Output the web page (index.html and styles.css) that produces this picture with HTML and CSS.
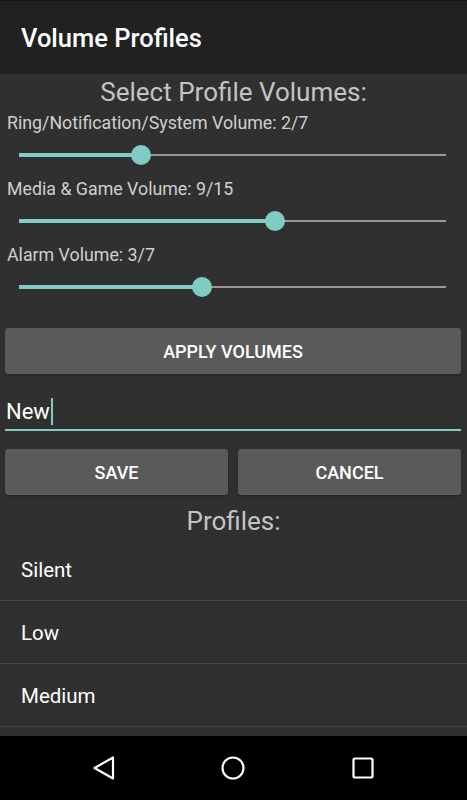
FILE: index.html
```html
<!DOCTYPE html>
<html>
<head>
<meta charset="utf-8">
<link rel="stylesheet" href="styles.css">
</head>
<body>
<div class="app">
  <header class="appbar"><h1 class="title">Volume Profiles</h1></header>
  <main class="content">
    <h2 class="heading">Select Profile Volumes:</h2>
    <div class="group">
      <div class="label">Ring/Notification/System Volume: 2/7</div>
      <div class="slider"><div class="track"><div class="fill" style="width:28.571%"></div><div class="thumb" style="left:28.571%"></div></div></div>
    </div>
    <div class="group">
      <div class="label">Media &amp; Game Volume: 9/15</div>
      <div class="slider"><div class="track"><div class="fill" style="width:60%"></div><div class="thumb" style="left:60%"></div></div></div>
    </div>
    <div class="group">
      <div class="label">Alarm Volume: 3/7</div>
      <div class="slider"><div class="track"><div class="fill" style="width:42.857%"></div><div class="thumb" style="left:42.857%"></div></div></div>
    </div>
    <button class="btn btn-wide">APPLY VOLUMES</button>
    <div class="edit"><span class="edit-text">New</span><span class="cursor"></span></div>
    <div class="btn-row">
      <button class="btn">SAVE</button>
      <button class="btn">CANCEL</button>
    </div>
    <h2 class="heading heading-profiles">Profiles:</h2>
    <ul class="list">
      <li class="item">Silent</li>
      <li class="item">Low</li>
      <li class="item">Medium</li>
    </ul>
  </main>
  <nav class="navbar">
    <svg class="nav-icon" width="28" height="28" viewBox="0 0 28 28"><path d="M24 3.5 L24 24.5 L5.5 14 Z" fill="none" stroke="#fff" stroke-width="2.2" stroke-linejoin="round"/></svg>
    <svg class="nav-icon" width="28" height="28" viewBox="0 0 28 28"><circle cx="14" cy="14" r="10.5" fill="none" stroke="#fff" stroke-width="2.2"/></svg>
    <svg class="nav-icon" width="28" height="28" viewBox="0 0 28 28"><rect x="4.5" y="4.5" width="19" height="19" rx="1.5" fill="none" stroke="#fff" stroke-width="2.2"/></svg>
  </nav>
</div>
</body>
</html>
```
FILE: styles.css
```css
* { box-sizing: border-box; }
html, body { margin: 0; padding: 0; background: #000; }
body { font-family: Roboto, "Noto Sans", sans-serif; }
.app {
  width: 467px;
  height: 800px;
  display: flex;
  flex-direction: column;
  overflow: hidden;
}
.appbar {
  height: 74px;
  flex: 0 0 74px;
  background: #212121;
  border-top: 1px solid #151515;
  display: flex;
  align-items: center;
  padding-left: 21px;
}
.title {
  margin: 0;
  color: #fff;
  font-size: 25.5px;
  font-weight: 500;
  letter-spacing: 0;
  padding-top: 1px;
}
.content {
  flex: 1 1 auto;
  background: #303030;
  overflow: hidden;
  display: flex;
  flex-direction: column;
  min-height: 0;
}
.heading {
  margin: 0;
  height: 36px;
  line-height: 36px;
  text-align: center;
  color: #c4c4c4;
  font-size: 26px;
  font-weight: 400;
  flex: 0 0 auto;
}
.group { flex: 0 0 auto; }
.label {
  padding: 2px 0 0 7px;
  line-height: 22px;
  height: 24px;
  color: #cfcfcf;
  font-size: 17.8px;
}
.slider {
  height: 42px;
  display: flex;
  align-items: center;
  padding: 0 21px 0 19px;
}
.track {
  position: relative;
  flex: 1;
  height: 2px;
  background: #9a9a9a;
}
.fill {
  position: absolute;
  left: 0;
  top: -1px;
  height: 4px;
  background: #80cbc4;
}
.thumb {
  position: absolute;
  top: 1px;
  width: 20px;
  height: 20px;
  margin: -10px 0 0 -10px;
  border-radius: 50%;
  background: #80cbc4;
}
.btn {
  border: 0;
  border-radius: 3px;
  background: #5a5a5a;
  color: #fff;
  font-family: Roboto, "Noto Sans", sans-serif;
  font-weight: 500;
  font-size: 18px;
  height: 46px;
  padding: 0;
  box-shadow: 0 1px 2px rgba(0,0,0,0.35);
}
.btn-wide {
  margin: 20px 6px 0 5px;
  flex: 0 0 46px;
}
.edit {
  flex: 0 0 auto;
  margin: 0 6px 0 5px;
  height: 57px;
  border-bottom: 2px solid #80cbc4;
  display: flex;
  align-items: flex-end;
  padding-bottom: 3px;
}
.edit-text {
  color: #fff;
  font-size: 22px;
  line-height: 28px;
  padding-left: 1px;
}
.cursor {
  width: 2px;
  height: 27px;
  background: #80cbc4;
  margin-left: 1px;
  margin-bottom: 1px;
}
.btn-row {
  flex: 0 0 auto;
  display: grid;
  grid-template-columns: 1fr 1fr;
  gap: 10px;
  margin: 18px 6px 0 5px;
}
.heading-profiles {
  line-height: 34px;
  padding-top: 9px;
  box-sizing: content-box;
  height: 34px;
}
.list {
  list-style: none;
  margin: 0;
  padding: 0;
}
.item {
  height: 63px;
  line-height: 64px;
  border-bottom: 1px solid #454545;
  padding-left: 21px;
  color: #fff;
  font-size: 20.5px;
}
.navbar {
  flex: 0 0 64px;
  height: 64px;
  background: #000;
  display: grid;
  grid-template-columns: 28px 28px 28px;
  column-gap: 102px;
  justify-content: start;
  align-items: center;
  padding-left: 89px;
}
.nav-icon { display: block; }
```
